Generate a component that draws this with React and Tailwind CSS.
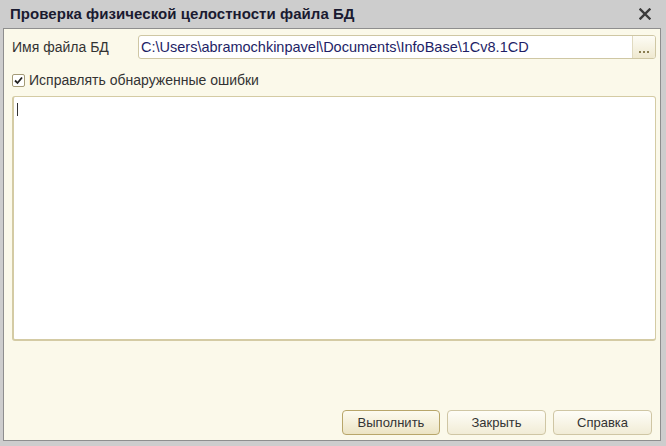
import React from "react";

export default function App() {
  return (
    <div
      className="w-[666px] h-[446px] bg-[#cdcdcd] flex flex-col pl-[3px] pr-[5px] pb-[5px] text-[#1c1c1c]"
      style={{ fontFamily: '"Liberation Sans", Arial, sans-serif' }}
    >
      {/* Title bar */}
      <div className="h-[28px] flex items-center justify-between pl-[7px] pr-[7px]">
        <span className="text-[15px] font-bold text-[#1a1a30] tracking-[0.05px]">
          Проверка физической целостности файла БД
        </span>
        <svg width="12" height="12" viewBox="0 0 12 12" className="mr-[3px]">
          <path d="M1.5 1.5 L10.5 10.5 M10.5 1.5 L1.5 10.5" stroke="#3a3a3a" strokeWidth="2.4" strokeLinecap="square" />
        </svg>
      </div>

      {/* Content */}
      <div className="flex-1 bg-[#fbf9ea] border border-[#8e8e8e] flex flex-col pl-[8px] pr-[4px] pt-[6px] pb-[5px] text-[14px]">
        <div className="flex items-center h-[24px]">
          <span className="w-[126px] text-[#333]">Имя файла БД</span>
          <div className="flex-1 h-[24px] flex bg-white border border-[#cfc7a4] rounded-[3px] overflow-hidden">
            <span className="flex-1 pl-[2px] leading-[22px] text-[14.5px] text-[#1e1e66] whitespace-nowrap">
              C:\Users\abramochkinpavel\Documents\InfoBase\1Cv8.1CD
            </span>
            <div className="w-[23px] border-l border-[#e0dac0] bg-gradient-to-b from-[#fdfcf5] to-[#efe9d0] flex items-end justify-center pb-[5px] gap-[2px]">
              <span className="w-[2px] h-[2px] bg-[#8a7e50]" />
              <span className="w-[2px] h-[2px] bg-[#8a7e50]" />
              <span className="w-[2px] h-[2px] bg-[#8a7e50]" />
            </div>
          </div>
        </div>

        <div className="flex items-center mt-[13px] h-[16px]">
          <div className="w-[13px] h-[13px] bg-white border border-[#a49b78] rounded-[2px] flex items-center justify-center">
            <svg width="11" height="11" viewBox="0 0 11 11">
              <path d="M2 5.5 L4.5 8 L9 2.5" fill="none" stroke="#222" strokeWidth="1.8" />
            </svg>
          </div>
          <span className="ml-[4px] text-[#333]">Исправлять обнаруженные ошибки</span>
        </div>

        <div className="mt-[8px] h-[245px] bg-white border border-[#d4cba4] rounded-[3px] border-l-[2px] border-b-[2px] pl-[3px] pt-[6px]">
          <div className="w-[1px] h-[13px] bg-[#333]" />
        </div>

        <div className="flex-1" />

        <div className="flex justify-end gap-[7px] pr-[4px]">
          <button className="w-[98px] h-[25px] rounded-[4px] border border-[#b8a66a] bg-gradient-to-b from-[#fdfbf0] to-[#ece4c4] text-[#333] text-[13px]">
            Выполнить
          </button>
          <button className="w-[99px] h-[25px] rounded-[4px] border border-[#cfc6a4] bg-gradient-to-b from-[#fefdf7] to-[#f1ecd6] text-[#333] text-[13px]">
            Закрыть
          </button>
          <button className="w-[99px] h-[25px] rounded-[4px] border border-[#cfc6a4] bg-gradient-to-b from-[#fefdf7] to-[#f1ecd6] text-[#333] text-[13px]">
            Справка
          </button>
        </div>
      </div>
    </div>
  );
}
